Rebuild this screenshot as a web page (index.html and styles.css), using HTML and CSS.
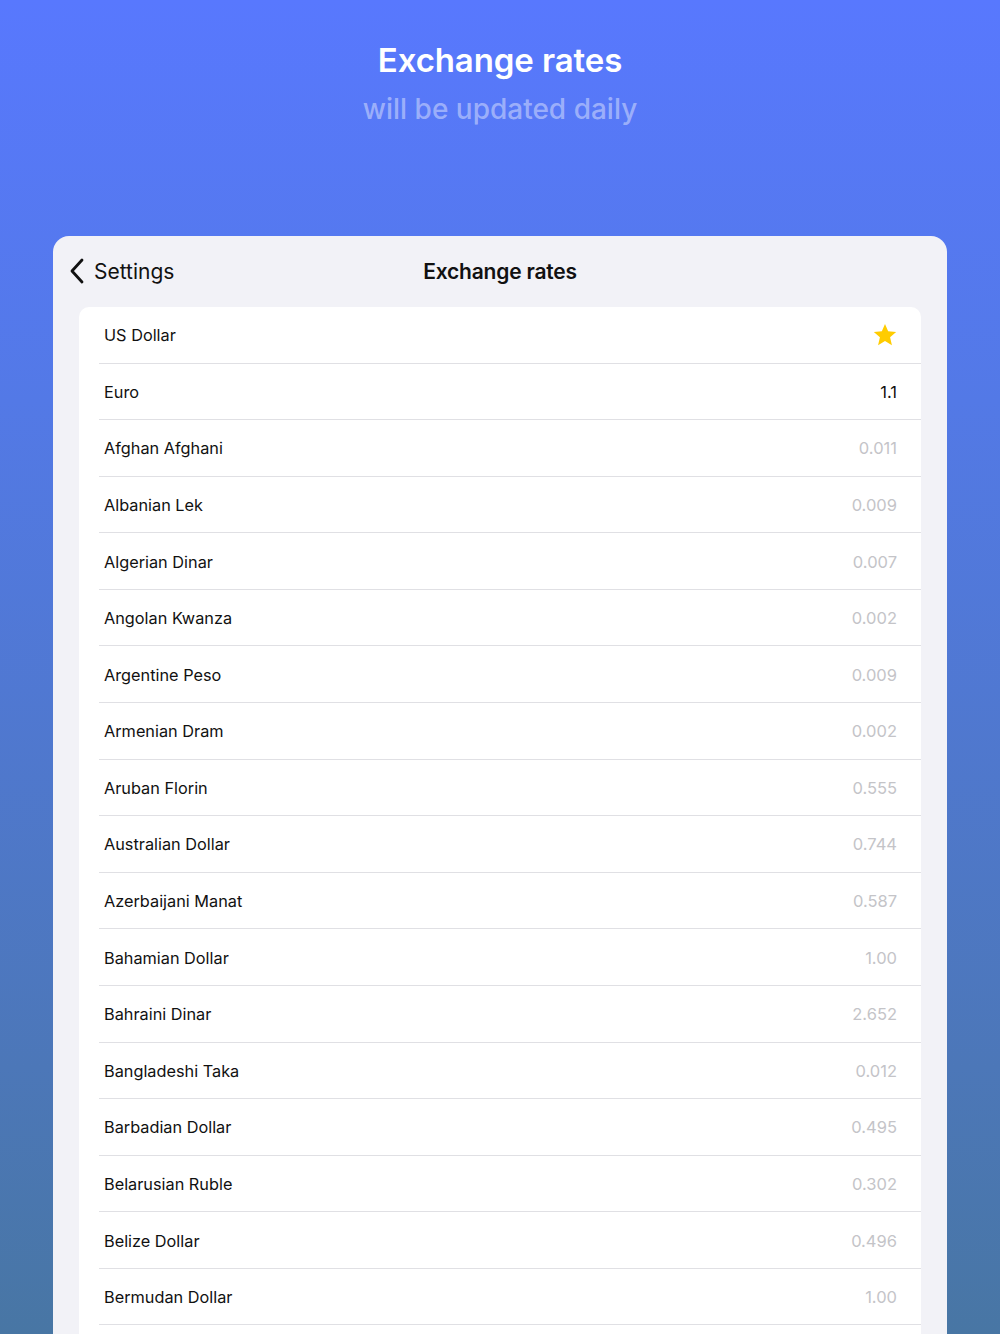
FILE: index.html
```html
<!DOCTYPE html>
<html lang="en">

<head>
   <meta charset="UTF-8">
   <title>Exchange rates</title>
   <link rel="stylesheet" href="styles.css">
</head>

<body>
   <!-- Header text -->
   <header class="hero">
      <h1>Exchange rates</h1>
      <p>will be updated daily</p>
   </header>

   <!-- Device screen -->
   <div class="screen">
      <div class="nav">
         <a class="back" href="#">
            <svg width="16" height="26" viewBox="0 0 16 26"><path d="M13 2 L3 13 L13 24" fill="none" stroke="#111" stroke-width="2.8" stroke-linecap="round" stroke-linejoin="round"/></svg>
            <span>Settings</span>
         </a>
         <div class="nav-title">Exchange rates</div>
      </div>

      <ul class="rates">
         <li><span>US Dollar</span>
            <svg class="star" width="26" height="26" viewBox="0 0 24 24"><path d="M12 1.8 L14.9 8.6 L22.3 9.2 L16.7 14.1 L18.4 21.4 L12 17.5 L5.6 21.4 L7.3 14.1 L1.7 9.2 L9.1 8.6 Z" fill="#ffcc00"/></svg>
         </li>
         <li><span>Euro</span><span class="val main">1.1</span></li>
         <li><span>Afghan Afghani</span><span class="val">0.011</span></li>
         <li><span>Albanian Lek</span><span class="val">0.009</span></li>
         <li><span>Algerian Dinar</span><span class="val">0.007</span></li>
         <li><span>Angolan Kwanza</span><span class="val">0.002</span></li>
         <li><span>Argentine Peso</span><span class="val">0.009</span></li>
         <li><span>Armenian Dram</span><span class="val">0.002</span></li>
         <li><span>Aruban Florin</span><span class="val">0.555</span></li>
         <li><span>Australian Dollar</span><span class="val">0.744</span></li>
         <li><span>Azerbaijani Manat</span><span class="val">0.587</span></li>
         <li><span>Bahamian Dollar</span><span class="val">1.00</span></li>
         <li><span>Bahraini Dinar</span><span class="val">2.652</span></li>
         <li><span>Bangladeshi Taka</span><span class="val">0.012</span></li>
         <li><span>Barbadian Dollar</span><span class="val">0.495</span></li>
         <li><span>Belarusian Ruble</span><span class="val">0.302</span></li>
         <li><span>Belize Dollar</span><span class="val">0.496</span></li>
         <li><span>Bermudan Dollar</span><span class="val">1.00</span></li>
      </ul>
   </div>
</body>

</html>
```
FILE: styles.css
```css
/* Page */
html,
body {
   margin: 0;
   padding: 0;
   height: 1334px;
   overflow: hidden;
}

body {
   font-family: Inter, "Noto Sans", sans-serif;
   background: linear-gradient(180deg, #5878fe 0%, #5379e6 30%, #4c77b8 80%, #4876a4 100%);
   color: #111;
}

/* Top text */
.hero {
   text-align: center;
   padding-top: 39px;
   height: 196px;
   box-sizing: border-box;
}

.hero h1 {
   margin: 0;
   font-size: 33px;
   font-weight: 600;
   color: #fff;
   line-height: 42px;
   letter-spacing: -0.1px;
}

.hero p {
   margin: 11px 0 0;
   font-size: 28px;
   font-weight: 500;
   color: rgba(255, 255, 255, 0.42);
   line-height: 34px;
}

/* Screen */
.screen {
   margin: 40px 53px 0;
   background: #f2f2f7;
   border-radius: 16px 16px 0 0;
   padding: 0 26px;
   height: 1200px;
}

.nav {
   position: relative;
   height: 71px;
   display: flex;
   align-items: center;
   justify-content: center;
}

.back {
   position: absolute;
   left: -10px;
   top: 22px;
   display: flex;
   align-items: center;
   gap: 9px;
   color: #111;
   text-decoration: none;
   font-size: 21px;
}

.nav-title {
   font-size: 21px;
   font-weight: 600;
   letter-spacing: -0.2px;
}

/* List */
.rates {
   list-style: none;
   margin: 0;
   padding: 0 0 60px;
   background: #fff;
   border-radius: 10px 10px 0 0;
}

.rates li {
   height: 56.58px;
   margin-left: 20px;
   padding: 1px 24px 0 5px;
   display: flex;
   align-items: center;
   justify-content: space-between;
   border-bottom: 1px solid #e0e0e4;
   box-sizing: border-box;
   font-size: 16.3px;
}

.val {
   color: #c4c4c8;
   font-size: 16.5px;
}

.val.main {
   color: #111;
}

.star {
   margin-right: -1px;
}
```
